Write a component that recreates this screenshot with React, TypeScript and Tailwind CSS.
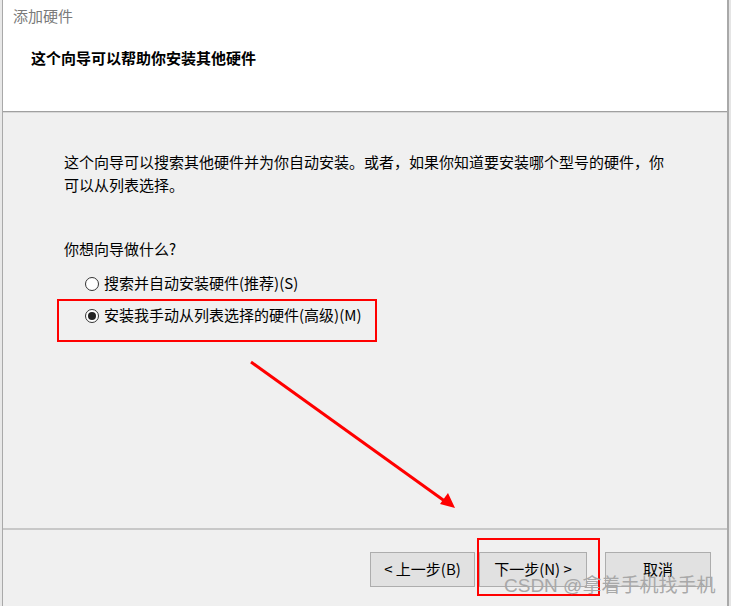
const Radio = ({ checked }: { checked?: boolean }) => (
  <span className="flex items-center justify-center w-[14px] h-[14px] rounded-full border border-[#333333] bg-white">
    {checked && <span className="w-[8px] h-[8px] rounded-full bg-[#222222]" />}
  </span>
);

const Button = ({ label, width }: { label: string; width: string }) => (
  <div
    className={`flex items-center justify-center h-[35px] ${width} bg-[#e1e1e1] border border-[#adadad] text-[15px] text-black`}
  >
    {label}
  </div>
);

export default function App() {
  return (
    <div
      className="relative w-[731px] h-[606px] overflow-hidden bg-white flex"
      style={{ fontFamily: '"Microsoft YaHei", "Noto Sans CJK SC", sans-serif' }}
    >
      <div className="w-[2px] bg-[#e8e8e8]" />
      <div className="w-[1px] bg-[#a9a9a9]" />

      <div className="flex flex-col w-[724px]">
        {/* header */}
        <div className="flex flex-col h-[111px] bg-white">
          <div className="pl-[10px] pt-[6px] text-[15px] leading-[20px] text-[#7a7a7a]">添加硬件</div>
          <div className="pl-[28px] pt-[22px] text-[15px] leading-[20px] font-bold text-black">
            这个向导可以帮助你安装其他硬件
          </div>
        </div>
        <div className="h-[1px] bg-[#a0a0a0]" />
        <div className="h-[1px] bg-[#d8d8d8]" />

        {/* body */}
        <div className="flex flex-col h-[415px] bg-[#f0f0f0] pl-[61px] pt-[37px] text-[15px] text-black">
          <div className="leading-[23px] whitespace-nowrap">
            这个向导可以搜索其他硬件并为你自动安装。或者，如果你知道要安装哪个型号的硬件，你
            <br />
            可以从列表选择。
          </div>
          <div className="mt-[41px] leading-[23px]">你想向导做什么?</div>
          <div className="flex items-center gap-[5px] pl-[21px] mt-[12px] h-[23px]">
            <Radio />
            <span>搜索并自动安装硬件(推荐)(S)</span>
          </div>
          <div className="flex items-center gap-[5px] pl-[21px] mt-[9px] h-[23px]">
            <Radio checked />
            <span>安装我手动从列表选择的硬件(高级)(M)</span>
          </div>
        </div>
        <div className="h-[2px] bg-[#c8c8c8]" />

        {/* footer */}
        <div className="flex-1 bg-[#f0f0f0] flex justify-end items-start pt-[22px] pr-[16px]">
          <Button label="< 上一步(B)" width="w-[105px]" />
          <div className="ml-[4px]">
            <Button label="下一步(N) >" width="w-[108px]" />
          </div>
          <div className="ml-[18px]">
            <Button label="取消" width="w-[106px]" />
          </div>
        </div>
      </div>

      <div className="w-[2px] bg-[#a9a9a9]" />
      <div className="w-[2px] bg-[#e5e5e5]" />

      {/* annotations */}
      <div className="absolute left-[57px] top-[299px] w-[320px] h-[43px] border-2 border-[#ff0000]" />
      <div className="absolute left-[477px] top-[538px] w-[123px] h-[58px] border-2 border-[#ff0000]" />
      <svg className="absolute left-0 top-0" width="731" height="606">
        <line x1="251" y1="362" x2="446" y2="502" stroke="#ff0000" strokeWidth="3" />
        <polygon points="455,508 440,504 448,493" fill="#ff0000" />
      </svg>
      <div
        className="absolute left-[504px] top-[574px] text-[19px] leading-[24px] text-[#a8a8a8] whitespace-nowrap"
        style={{ fontFamily: '"Liberation Sans", "Noto Sans CJK SC", sans-serif' }}
      >
        CSDN @拿着手机找手机
      </div>
    </div>
  );
}
